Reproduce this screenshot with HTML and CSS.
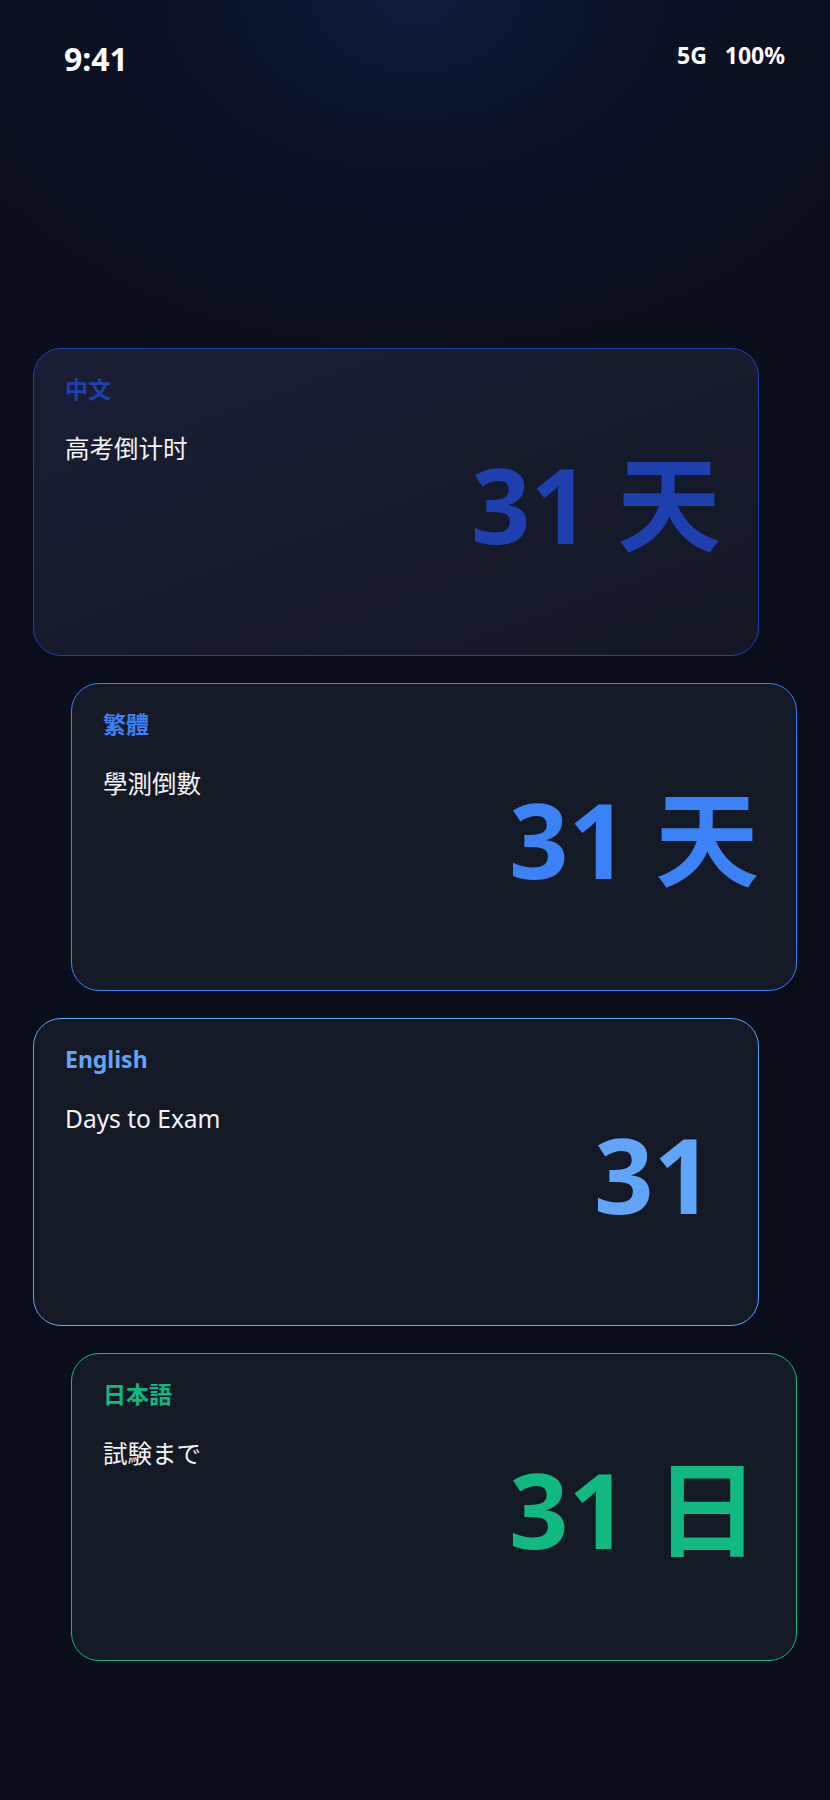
FILE: index.html
```html
<!DOCTYPE html>
<html lang="zh-CN">
<head>
    <meta charset="UTF-8">
    <meta name="viewport" content="width=device-width, initial-scale=1.0">
    <title>高考倒计时</title>
    <link rel="stylesheet" href="styles.css">
</head>
<body>
    <div class="screen">
        <!-- Status bar -->
        <div class="status-bar">
            <span class="time">9:41</span>
            <span class="signal">5G&nbsp;&nbsp;&nbsp;100%</span>
        </div>

        <main class="cards">
            <section class="card card-zh left" lang="zh-CN">
                <p class="label">中文</p>
                <p class="subtitle">高考倒计时</p>
                <p class="count">31 天</p>
            </section>

            <section class="card card-tw right" lang="zh-TW">
                <p class="label">繁體</p>
                <p class="subtitle">學測倒數</p>
                <p class="count">31 天</p>
            </section>

            <section class="card card-en left" lang="en">
                <p class="label">English</p>
                <p class="subtitle">Days to Exam</p>
                <p class="count">31</p>
            </section>

            <section class="card card-ja right" lang="ja">
                <p class="label">日本語</p>
                <p class="subtitle">試験まで</p>
                <p class="count">31 日</p>
            </section>
        </main>
    </div>
</body>
</html>
```

FILE: styles.css
```css
html, body {
    margin: 0;
    padding: 0;
}
body {
    font-family: "Noto Sans", "Noto Sans CJK SC", sans-serif;
    background-color: #0a0e1a;
    color: #fff;
}
.screen {
    min-height: 1800px;
    background: radial-gradient(ellipse 520px 360px at 50% 0%, #0f1a3a 0%, rgba(13, 22, 48, 0.6) 45%, rgba(10, 14, 26, 0) 100%), #0a0e1a;
}

/* Status bar */
.status-bar {
    display: flex;
    justify-content: space-between;
    align-items: flex-start;
    padding: 37px 45px 0 64px;
    font-weight: 700;
}
.time {
    font-size: 32px;
    line-height: 44px;
}
.signal {
    font-size: 23px;
    line-height: 36px;
}

/* Cards */
.cards {
    display: flex;
    flex-direction: column;
    gap: 27px;
    padding-top: 267px;
}
.card {
    box-sizing: border-box;
    width: 726px;
    height: 308px;
    padding: 25px 37px 0 31px;
    border: 1.5px solid;
    border-radius: 28px;
    background-color: rgba(22, 27, 40, 0.88);
}
.card.left {
    margin-left: 33px;
}
.card.right {
    margin-left: 71px;
}
.card p {
    margin: 0;
}
.label {
    font-size: 23px;
    line-height: 30px;
    font-weight: 700;
}
.subtitle {
    margin-top: 29px !important;
    font-size: 24.5px;
    line-height: 32px;
    color: #f3f4f6;
}
.count {
    margin-top: -13px !important;
    text-align: right;
    font-size: 104px;
    line-height: 1;
    font-weight: 700;
}

.card-zh {
    border-color: #1e40af;
    color: #1e40af;
    background: linear-gradient(160deg, rgba(26, 32, 56, 0.9), rgba(20, 24, 36, 0.92));
}
.card-tw {
    border-color: #3b82f6;
    color: #3b82f6;
    font-family: "Noto Sans", "Noto Sans CJK TC", sans-serif;
}
.card-en {
    border-color: #60a5fa;
    color: #60a5fa;
}
.card-en .count {
    padding-right: 8px;
}
.card-ja {
    border-color: #10b981;
    color: #10b981;
    font-family: "Noto Sans", "Noto Sans CJK JP", sans-serif;
}
.card .subtitle {
    color: #f3f4f6;
}
```
